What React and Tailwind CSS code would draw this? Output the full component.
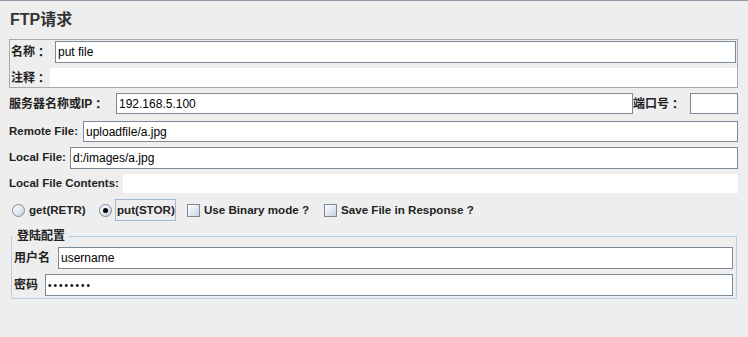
import React from "react";

function Radio({ checked }) {
  return (
    <div className="w-[13px] h-[13px] rounded-full border border-[#7a8a99] bg-linear-to-br from-white to-[#c6d3e2] flex items-center justify-center shrink-0">
      {checked && <div className="w-[5px] h-[5px] rounded-full bg-black" />}
    </div>
  );
}

function Check() {
  return (
    <div className="w-[13px] h-[13px] border border-[#7a8a99] bg-linear-to-br from-white to-[#c6d3e2] shrink-0" />
  );
}

function Input({ value, className = "" }) {
  return (
    <div className={"h-full bg-white border border-[#7a8a99] flex items-center pl-[2px] text-[12px] font-normal text-black whitespace-nowrap " + className}>
      {value}
    </div>
  );
}

function Colon() {
  return <span className="font-[Noto_Sans_CJK_JP,sans-serif]">：</span>;
}

export default function App() {
  return (
    <div className="w-[748px] h-[337px] bg-[#eeeeee] border-t border-[#8d99a5] font-[Liberation_Sans,Noto_Sans_CJK_SC,sans-serif] text-[#222] text-[12px] font-bold flex flex-col overflow-hidden">
      <div className="h-[38px] pl-[10px] pt-[9px] text-[16px] leading-[20px] font-bold text-[#333]">FTP请求</div>

      <div className="ml-[9px] w-[729px] h-[49px] border border-[#a9a9a9] flex flex-col">
        <div className="flex mt-px h-[22px] mr-px">
          <div className="w-[45px] shrink-0 whitespace-nowrap pl-px flex items-center">名称<Colon /></div>
          <Input value="put file" className="flex-1" />
        </div>
        <div className="flex mt-[5px] h-[19px]">
          <div className="w-[40px] shrink-0 whitespace-nowrap pl-px flex items-center">注释<Colon /></div>
          <div className="flex-1 bg-white" />
        </div>
      </div>

      <div className="flex mt-[5px] h-[21px] pl-[9px]">
        <div className="w-[107px] shrink-0 whitespace-nowrap flex items-center">服务器名称或IP<Colon /></div>
        <Input value="192.168.5.100" className="w-[517px] shrink-0" />
        <div className="w-[57px] shrink-0 whitespace-nowrap flex items-center">端口号<Colon /></div>
        <Input value="" className="w-[48px] shrink-0" />
      </div>

      <div className="flex mt-[7px] h-[21px] pl-[9px] pr-[10px]">
        <div className="w-[74px] shrink-0 whitespace-nowrap flex items-center text-[11.5px]">Remote File:</div>
        <Input value="uploadfile/a.jpg" className="flex-1" />
      </div>

      <div className="flex mt-[5px] h-[22px] pl-[9px] pr-[10px]">
        <div className="w-[61px] shrink-0 whitespace-nowrap flex items-center text-[11.5px]">Local File:</div>
        <Input value="d:/images/a.jpg" className="flex-1" />
      </div>

      <div className="flex mt-[5px] h-[19px] pl-[9px] pr-[10px]">
        <div className="w-[114px] shrink-0 whitespace-nowrap flex items-center text-[11.5px]">Local File Contents:</div>
        <div className="flex-1 bg-white" />
      </div>

      <div className="flex items-center mt-[6px] h-[22px] pl-[12px] whitespace-nowrap text-[11.6px]">
        <Radio />
        <span className="ml-[4px] w-[70px] shrink-0">get(RETR)</span>
        <Radio checked />
        <span className="ml-[3px] w-[61px] shrink-0 h-[22px] border border-[#a3b8cc] flex items-center pl-px">put(STOR)</span>
        <div className="ml-[11px]"><Check /></div>
        <span className="ml-[4px] w-[120px] shrink-0">Use Binary mode ?</span>
        <Check />
        <span className="ml-[4px]">Save File in Response ?</span>
      </div>

      <fieldset className="mt-[8px] ml-[11px] w-[726px] border border-[#b8cfe5] pb-[2px] pr-[3px]">
        <legend className="ml-px px-[4px] leading-[14px]">登陆配置</legend>
        <div className="flex mt-[4px] h-[22px] pl-[2px]">
          <div className="w-[44px] shrink-0 whitespace-nowrap flex items-center">用户名</div>
          <Input value="username" className="flex-1" />
        </div>
        <div className="flex mt-[5px] h-[22px] pl-[2px]">
          <div className="w-[31px] shrink-0 whitespace-nowrap flex items-center">密码</div>
          <Input value={<span className="tracking-[2px] text-[10px]">••••••••</span>} className="flex-1" />
        </div>
      </fieldset>
    </div>
  );
}
